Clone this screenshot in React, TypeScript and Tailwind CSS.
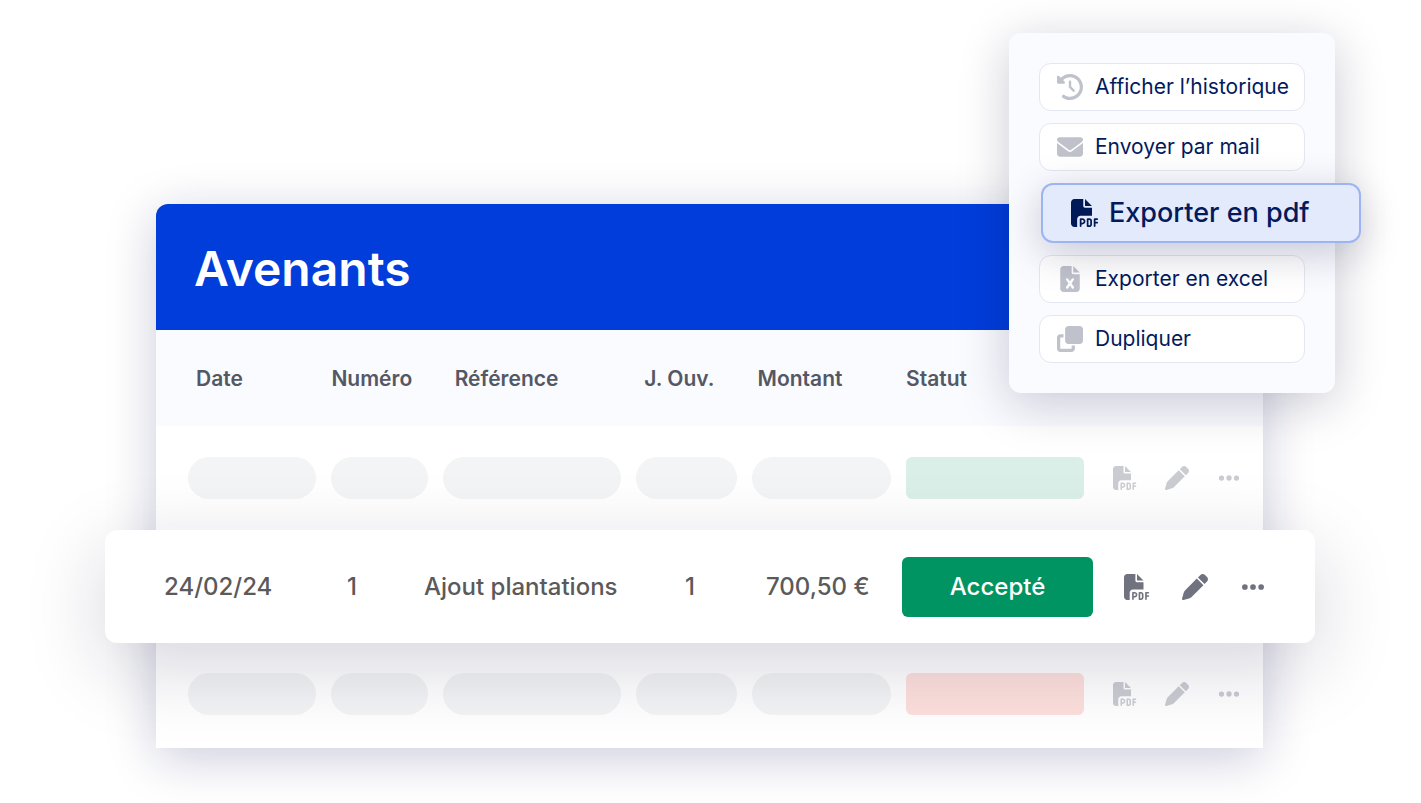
import type { ReactNode } from "react";
import clsx from "clsx";
import { FaClockRotateLeft, FaClone, FaEllipsis, FaEnvelope, FaFileExcel, FaFilePdf, FaPen } from "react-icons/fa6";

type MenuEntry = {
  label: string;
  icon: ReactNode;
  active?: boolean;
};

const menuEntries: MenuEntry[] = [
  { label: "Afficher l’historique", icon: <FaClockRotateLeft /> },
  { label: "Envoyer par mail", icon: <FaEnvelope /> },
  { label: "Exporter en pdf", icon: <FaFilePdf />, active: true },
  { label: "Exporter en excel", icon: <FaFileExcel /> },
  { label: "Dupliquer", icon: <FaClone /> },
];

const columns = [
  { label: "Date", className: "pl-2" },
  { label: "Numéro", className: "" },
  { label: "Référence", className: "pl-3" },
  { label: "J. Ouv.", className: "pl-2" },
  { label: "Montant", className: "pl-1.5" },
  { label: "Statut", className: "" },
];

const rowGrid = "grid grid-cols-[128fr_96fr_178fr_100fr_139fr_177fr_142fr] gap-x-[15px] pl-8 pr-5.5";

function RowActions({ className }: { className: string }) {
  return (
    <div className={clsx("flex items-center", className)}>
      <button type="button" aria-label="PDF">
        <FaFilePdf />
      </button>
      <button type="button" aria-label="Modifier">
        <FaPen />
      </button>
      <button type="button" aria-label="Plus">
        <FaEllipsis />
      </button>
    </div>
  );
}

function PlaceholderRow({ statusClass, className }: { statusClass: string; className: string }) {
  return (
    <tr className={clsx(rowGrid, "items-center", className)}>
      {[0, 1, 2, 3, 4].map((cell) => (
        <td key={cell} className="h-[42px] rounded-full bg-[#f2f4f5]" />
      ))}
      <td className={clsx("h-[42px] rounded-md", statusClass)} />
      <td className="pl-3.5">
        <RowActions className="gap-7 text-2xl text-[#cbccd2]" />
      </td>
    </tr>
  );
}

function ActionMenu() {
  return (
    <nav className="absolute right-[86px] top-[33px] z-20 flex w-[326px] flex-col gap-3 rounded-xl bg-[#fafbff] p-[30px] shadow-[0_10px_50px_rgba(20,20,60,0.22)]">
      {menuEntries.map((entry) => (
        <button
          key={entry.label}
          type="button"
          className={clsx(
            "flex items-center whitespace-nowrap text-[#031a5c]",
            entry.active
              ? "relative z-10 -mr-14 ml-0.5 h-15 gap-2.5 rounded-xl border-2 border-[#9db4f2] bg-[#e3eafb] pl-7 text-[27px] font-medium shadow-[0_10px_40px_rgba(20,20,60,0.22)]"
              : "h-12 gap-3 rounded-xl border border-[#e4e6f1] bg-white pl-[17px] text-[21px]",
          )}
        >
          <span className={entry.active ? "text-[28px] text-[#001a57]" : "text-[26px] text-[#bfc2cb]"}>{entry.icon}</span>
          {entry.label}
        </button>
      ))}
    </nav>
  );
}

export default function App() {
  return (
    <main className="relative min-h-screen overflow-hidden bg-white pl-39 pr-[158px] pt-51 font-['Inter',sans-serif]">
      <section className="rounded-t-xl bg-white shadow-[0_10px_50px_rgba(20,25,90,0.22)]">
        <header className="flex h-[126px] items-center rounded-t-xl bg-[#003ddb] px-[38px] pt-1">
          <h1 className="text-5xl font-semibold text-white">Avenants</h1>
        </header>

        <table className="block">
          <thead className="block">
            <tr className={clsx(rowGrid, "h-24 items-center bg-[#fafbff] pt-0.5")}>
              {columns.map((column) => (
                <th key={column.label} scope="col" className={clsx("whitespace-nowrap text-left text-[21px] font-semibold text-[#545864]", column.className)}>
                  {column.label}
                </th>
              ))}
            </tr>
          </thead>
          <tbody className="block">
            <PlaceholderRow className="h-26" statusClass="bg-[#daefe7]" />
            <tr className="relative z-10 -ml-[51px] -mr-[52px] grid h-[113px] grid-cols-[140fr_96fr_240fr_100fr_162fr_191fr_222fr] items-center whitespace-nowrap rounded-xl bg-white pl-[59px] text-2xl font-medium text-[#5a5a5a] shadow-[0_22px_80px_rgba(20,16,60,0.18)]">
              <td>24/02/24</td>
              <td className="text-center">1</td>
              <td className="pl-6">Ajout plantations</td>
              <td className="text-center">1</td>
              <td className="pl-6.5">700,50 €</td>
              <td className="flex h-15 items-center justify-center rounded-md bg-[#009463] text-white">Accepté</td>
              <td className="pl-[31px]">
                <RowActions className="gap-8 text-[26px] text-[#70727f]" />
              </td>
            </tr>
            <PlaceholderRow className="h-[105px] pb-1" statusClass="bg-[#fde0dc]" />
          </tbody>
        </table>
      </section>

      <ActionMenu />
    </main>
  );
}
